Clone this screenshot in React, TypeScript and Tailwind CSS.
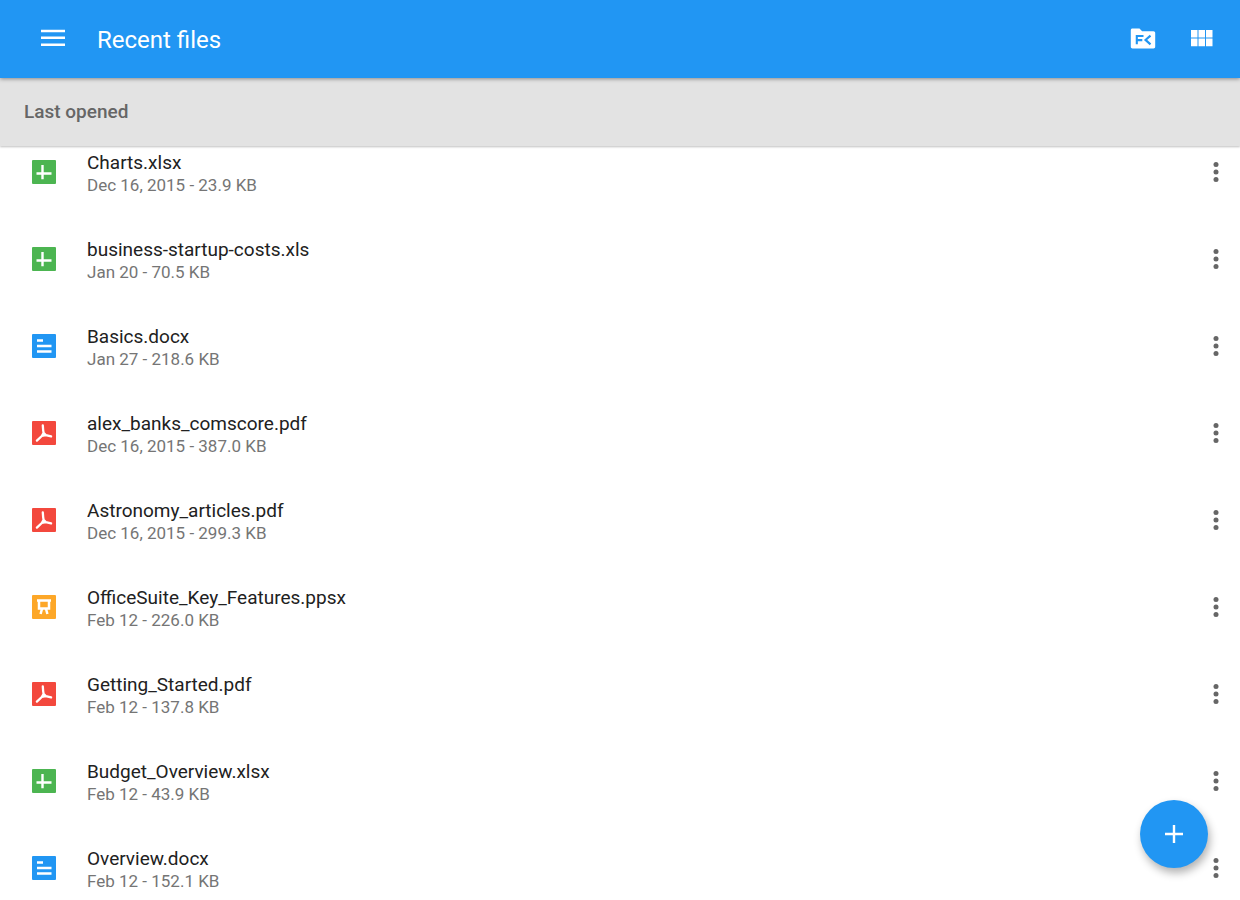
import React from 'react';

type FileType = 'sheet' | 'doc' | 'pdf' | 'slides';

interface RecentFile {
  name: string;
  info: string;
  type: FileType;
}

const files: RecentFile[] = [
  { name: 'Charts.xlsx', info: 'Dec 16, 2015 - 23.9 KB', type: 'sheet' },
  { name: 'business-startup-costs.xls', info: 'Jan 20 - 70.5 KB', type: 'sheet' },
  { name: 'Basics.docx', info: 'Jan 27 - 218.6 KB', type: 'doc' },
  { name: 'alex_banks_comscore.pdf', info: 'Dec 16, 2015 - 387.0 KB', type: 'pdf' },
  { name: 'Astronomy_articles.pdf', info: 'Dec 16, 2015 - 299.3 KB', type: 'pdf' },
  { name: 'OfficeSuite_Key_Features.ppsx', info: 'Feb 12 - 226.0 KB', type: 'slides' },
  { name: 'Getting_Started.pdf', info: 'Feb 12 - 137.8 KB', type: 'pdf' },
  { name: 'Budget_Overview.xlsx', info: 'Feb 12 - 43.9 KB', type: 'sheet' },
  { name: 'Overview.docx', info: 'Feb 12 - 152.1 KB', type: 'doc' },
];

const iconColors: Record<FileType, string> = {
  sheet: '#4cb551',
  doc: '#2196f3',
  pdf: '#f3483d',
  slides: '#fda728',
};

function FileIcon({ type }: { type: FileType }) {
  return (
    <svg viewBox="0 0 24 24" className="size-6 shrink-0" fill="none" stroke="white" aria-hidden="true">
      <rect width="24" height="24" rx="1" fill={iconColors[type]} stroke="none" />
      {type === 'sheet' && <path d="M4.5 13.5h15M10.5 5v14.3" strokeWidth="2.4" />}
      {type === 'doc' && <path d="M5 6.5h6M5 12h14.5M5 17.5h14.5" strokeWidth="2.3" />}
      {type === 'pdf' && (
        <path
          d="M10.8 4.5c.2 3.6.3 5.5.8 7.4L9.8 15l-4.9 4.6M9.8 15l4-.9 5.3 1.3M11.6 11.9l2.2 2.2"
          strokeWidth="2.3"
          strokeLinecap="round"
          strokeLinejoin="round"
        />
      )}
      {type === 'slides' && (
        <path d="M5 5.6h14M7 5.6v7.8h10V5.6M10 13.8l-1.4 5.2M14 13.8l1.4 5.2" strokeWidth="2.5" />
      )}
    </svg>
  );
}

function FileRow({ file }: { file: RecentFile }) {
  return (
    <li className="flex h-12 items-center pl-8 pr-3">
      <FileIcon type={file.type} />
      <a href="#" className="ml-[31px] min-w-0 flex-1 pt-0.5">
        <span className="block truncate text-[19px] leading-6 text-[#212121]">{file.name}</span>
        <span className="block truncate text-[17px] leading-5 text-[#757575]">{file.info}</span>
      </a>
      <button type="button" aria-label={`More options for ${file.name}`} className="flex h-10 w-6 items-center justify-center">
        <svg viewBox="0 0 6 20" className="h-5 w-1.5" fill="#666666">
          <circle cx="3" cy="2.6" r="2.5" />
          <circle cx="3" cy="10" r="2.5" />
          <circle cx="3" cy="17.4" r="2.5" />
        </svg>
      </button>
    </li>
  );
}

export default function App() {
  return (
    <div className="min-h-screen bg-white font-[Roboto,sans-serif]">
      <header className="relative flex h-[78px] items-center bg-[#2196f3] pb-0.5 pl-[41px] pr-[27px] text-white shadow-[0_1px_4px_rgba(0,0,0,0.4)]">
        <button type="button" aria-label="Open menu">
          <svg viewBox="0 0 24 18" className="h-[18px] w-6" fill="currentColor">
            <path d="M0 .8h24v2.5H0zM0 7.6h24v2.5H0zM0 14.4h24v2.5H0z" />
          </svg>
        </button>
        <h1 className="ml-8 flex-1 pt-1 text-2xl">Recent files</h1>
        <button type="button" aria-label="File Commander">
          <svg viewBox="0 0 26 22" className="h-[22px] w-[26px]" fill="none">
            <path d="M2.5 1.500h7l2.600 2.800h11.400c1 0 1.700.7 1.700 1.700v13.800c0 1-.7 1.700-1.700 1.700h-21c-1 0-1.700-.7-1.700-1.700V3.200c0-1 .7-1.700 1.700-1.700z" fill="white" />
            <path d="M6.800 17.300V9h6.700M6.800 13.100h5.500M20.500 8.600l-5 4.300 5 4.500" stroke="#2196f3" strokeWidth="2.100" />
          </svg>
        </button>
        <button type="button" aria-label="Grid view" className="ml-[35px]">
          <svg viewBox="0 0 22 18" className="h-[18px] w-[22px]" fill="white">
            <path d="M0 1h6.500v7.600H0zM7.500 1h6.500v7.600H7.500zM15 1h6.500v7.600H15zM0 9.600h6.500v7.600H0zM7.500 9.600h6.500v7.600H7.500zM15 9.600h6.500v7.600H15z" />
          </svg>
        </button>
      </header>

      <h2 className="flex h-[68px] items-center bg-[#e3e3e3] px-6 pt-px text-[19px] font-medium text-[#666666] shadow-[0_1px_2px_rgba(0,0,0,0.25)]">
        Last opened
      </h2>

      <ul className="flex flex-col gap-[39px] pb-2 pt-0.5">
        {files.map((file) => (
          <FileRow key={file.name} file={file} />
        ))}
      </ul>

      <button
        type="button"
        aria-label="New file"
        className="fixed bottom-8 right-8 flex size-[68px] items-center justify-center rounded-full bg-[#2196f3] shadow-[2px_5px_8px_rgba(0,0,0,0.3)]"
      >
        <svg viewBox="0 0 18 18" className="size-[18px]" stroke="white" strokeWidth="2.4">
          <path d="M9 0v18M0 9h18" />
        </svg>
      </button>
    </div>
  );
}
